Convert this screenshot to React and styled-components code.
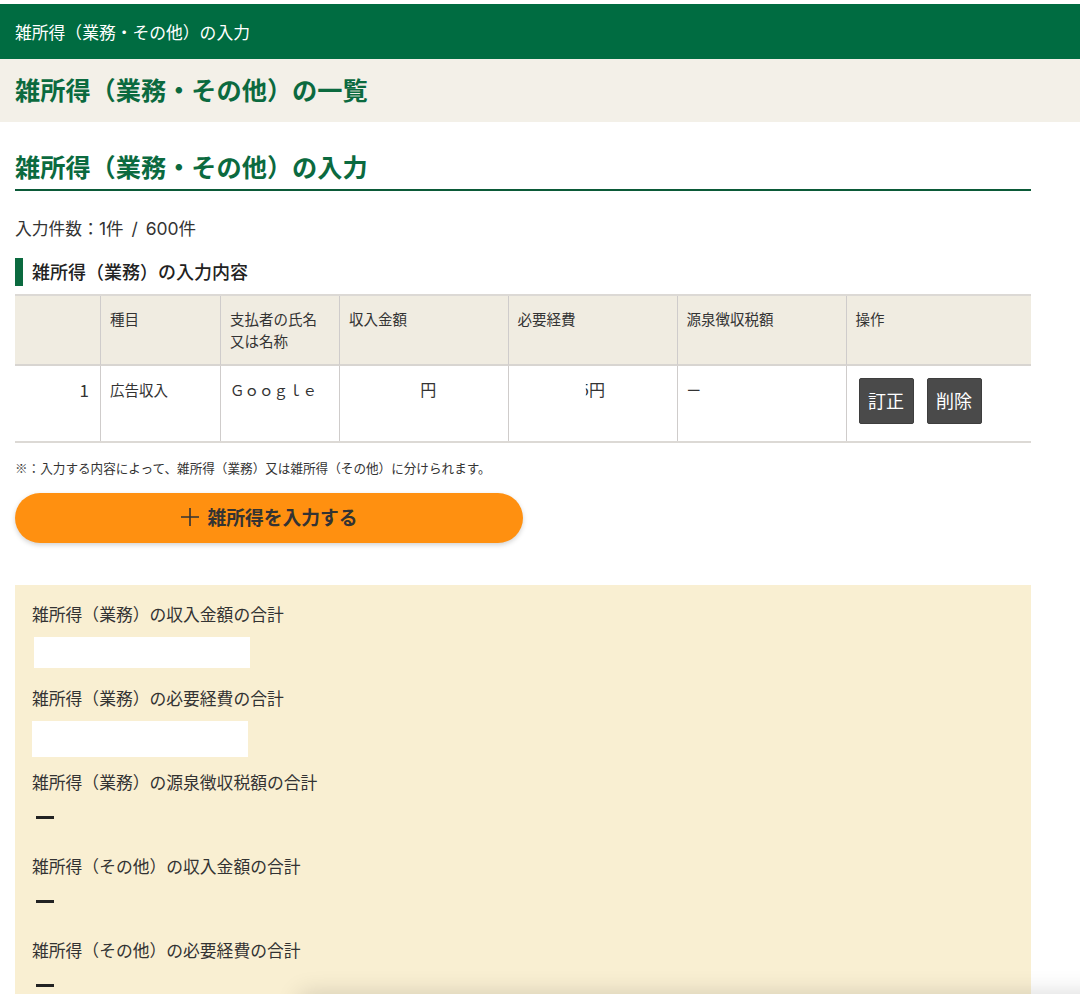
import styled, { createGlobalStyle } from "styled-components";

const GlobalStyle = createGlobalStyle`
  html, body {
    margin: 0;
    height: 100%;
    overflow: hidden;
    background: #fff;
  }
  body {
    font-family: "Noto Sans CJK JP", "Noto Sans", sans-serif;
    color: #333;
  }
`;

const Page = styled.div`
  height: 994px;
  padding-top: 4px;
  box-sizing: border-box;
  overflow: hidden;
`;
const TopBar = styled.div`
  height: 55px;
  padding-left: 15px;
  display: flex;
  align-items: center;
  background: #006c41;
  color: #fff;
  font-size: 16.8px;
`;
const SubBar = styled.div`
  height: 63px;
  box-sizing: border-box;
  padding: 0 0 3px 15px;
  display: flex;
  align-items: center;
  background: #f3f0e8;
  color: #0b6a3f;
  font-size: 25.2px;
  font-weight: 700;
`;
const Main = styled.div`
  width: 1016px;
  margin-left: 15px;
`;
const Title = styled.h2`
  height: 43px;
  margin: 24px 0 0;
  box-sizing: border-box;
  padding-bottom: 3px;
  display: flex;
  align-items: center;
  color: #0b6a3f;
  font-size: 25.2px;
  font-weight: 700;
`;
const TitleRule = styled.div`
  height: 2px;
  background: #0b5a38;
`;
const Count = styled.div`
  height: 24px;
  margin-top: 26px;
  line-height: 24px;
  font-family: Inter, "Noto Sans CJK JP", sans-serif;
  font-size: 16.8px;
`;
const CountNum = styled.span`
  font-size: 17.5px;
  word-spacing: 3px;
`;
const SectionHead = styled.h3`
  height: 28px;
  box-sizing: border-box;
  margin: 17px 0 8px;
  padding: 0 0 3px 9px;
  display: flex;
  align-items: center;
  border-left: 8px solid #0b6a3f;
  color: #222;
  font-size: 18px;
  font-weight: 500;
`;
const Table = styled.div`
  display: grid;
  grid-template-columns: 85px 120px 119px 168.5px 169px 169px 185.5px;
  border-top: 2px solid #dcd9d5;
  border-bottom: 2px solid #dcd9d5;
  font-size: 14.5px;
  line-height: 22px;
`;
const Cell = styled.div`
  box-sizing: border-box;
  height: ${(p) => (p.$head ? "70px" : "75px")};
  padding: ${(p) => (p.$head ? "12px" : "13px")} 9px 0;
  background: ${(p) => (p.$head ? "#f0ece1" : "#fff")};
  border-left: ${(p) => (p.$first ? "none" : "1px solid #cfcccb")};
  border-bottom: ${(p) => (p.$head ? "2px solid #d8d5d1" : "none")};
  text-align: ${(p) => p.$align || "left"};
`;
const RowNo = styled(Cell)`
  padding-right: 11px;
  font-size: 17px;
`;
const Amount = styled(Cell)`
  padding-top: 12px;
  font-size: 16px;
`;
const Digit = styled.span`
  display: inline-block;
  width: 9px;
  clip-path: inset(0 0 0 ${(p) => p.$cut}%);
`;
const Actions = styled(Cell)`
  display: flex;
  gap: 13px;
  padding: 12px 0 0 12px;
`;
const ActionBtn = styled.button`
  width: 55px;
  height: 46px;
  padding: 0 0 2px;
  border: 1px solid #3e3e3e;
  border-radius: 2px;
  background: #4a4a4a;
  color: #fff;
  font-family: inherit;
  font-size: 18px;
`;
const Note = styled.p`
  margin: 16px 0 0;
  height: 18px;
  line-height: 18px;
  font-size: 12.6px;
`;
const AddBtn = styled.button`
  width: 508px;
  height: 50px;
  margin-top: 16px;
  padding: 0 0 3px;
  display: flex;
  align-items: center;
  justify-content: center;
  gap: 7px;
  border: none;
  border-radius: 25px;
  background: #ff9010;
  box-shadow: 0 2px 5px rgba(0, 0, 0, 0.18);
  color: #333;
  font-family: inherit;
  font-size: 18.8px;
  font-weight: 700;
`;
const Panel = styled.div`
  margin-top: 42px;
  padding: 15px 17px 20px;
  background: #f9efd2;
`;
const TotalLabel = styled.div`
  height: 28px;
  line-height: 28px;
  font-size: 16.8px;
`;
const TotalValue = styled.div`
  height: 56px;
  box-sizing: border-box;
  padding-top: ${(p) => p.$top}px;
`;
const Redacted = styled.div`
  width: 216px;
  height: ${(p) => p.$height}px;
  margin-left: ${(p) => p.$left}px;
  background: #fff;
`;
const Dash = styled.div`
  width: 18px;
  height: 3px;
  margin-left: 4px;
  background: #222;
`;
const BottomShade = styled.div`
  position: fixed;
  left: 300px;
  right: -40px;
  bottom: -30px;
  height: 30px;
  box-shadow: 0 0 24px rgba(0, 0, 0, 0.16);
`;

const Plus = () => (
  <svg width="20" height="20" viewBox="0 0 20 20" fill="none">
    <path d="M1 10h18M10 1v18" stroke="#333" strokeWidth="1.6" />
  </svg>
);

const heads = [
  "",
  "種目",
  <>
    支払者の氏名
    <br />
    又は名称
  </>,
  "収入金額",
  "必要経費",
  "源泉徴収税額",
  "操作",
];

const totals = [
  { label: "雑所得（業務）の収入金額の合計", top: 9, left: 2, height: 31 },
  { label: "雑所得（業務）の必要経費の合計", top: 9, left: 0, height: 36 },
  { label: "雑所得（業務）の源泉徴収税額の合計", top: 20 },
  { label: "雑所得（その他）の収入金額の合計", top: 20 },
  { label: "雑所得（その他）の必要経費の合計", top: 20 },
];

export default function App() {
  return (
    <Page>
      <GlobalStyle />
      <TopBar>雑所得（業務・その他）の入力</TopBar>
      <SubBar>雑所得（業務・その他）の一覧</SubBar>
      <Main>
        <Title>雑所得（業務・その他）の入力</Title>
        <TitleRule />
        <Count>
          入力件数：<CountNum>1件 / 600件</CountNum>
        </Count>
        <SectionHead>雑所得（業務）の入力内容</SectionHead>
        <Table>
          {heads.map((h, i) => (
            <Cell key={i} $head $first={i === 0}>
              {h}
            </Cell>
          ))}
          <RowNo $first $align="right">
            1
          </RowNo>
          <Cell>広告収入</Cell>
          <Cell>Ｇｏｏｇｌｅ</Cell>
          <Amount $align="center">
            <Digit $cut={100}>5</Digit>円
          </Amount>
          <Amount $align="center">
            <Digit $cut={65}>5</Digit>円
          </Amount>
          <Cell>ー</Cell>
          <Actions>
            <ActionBtn>訂正</ActionBtn>
            <ActionBtn>削除</ActionBtn>
          </Actions>
        </Table>
        <Note>※：入力する内容によって、雑所得（業務）又は雑所得（その他）に分けられます。</Note>
        <AddBtn>
          <Plus />
          雑所得を入力する
        </AddBtn>
        <Panel>
          {totals.map((t) => (
            <div key={t.label}>
              <TotalLabel>{t.label}</TotalLabel>
              <TotalValue $top={t.top}>
                {t.height ? <Redacted $left={t.left} $height={t.height} /> : <Dash />}
              </TotalValue>
            </div>
          ))}
        </Panel>
      </Main>
      <BottomShade />
    </Page>
  );
}
